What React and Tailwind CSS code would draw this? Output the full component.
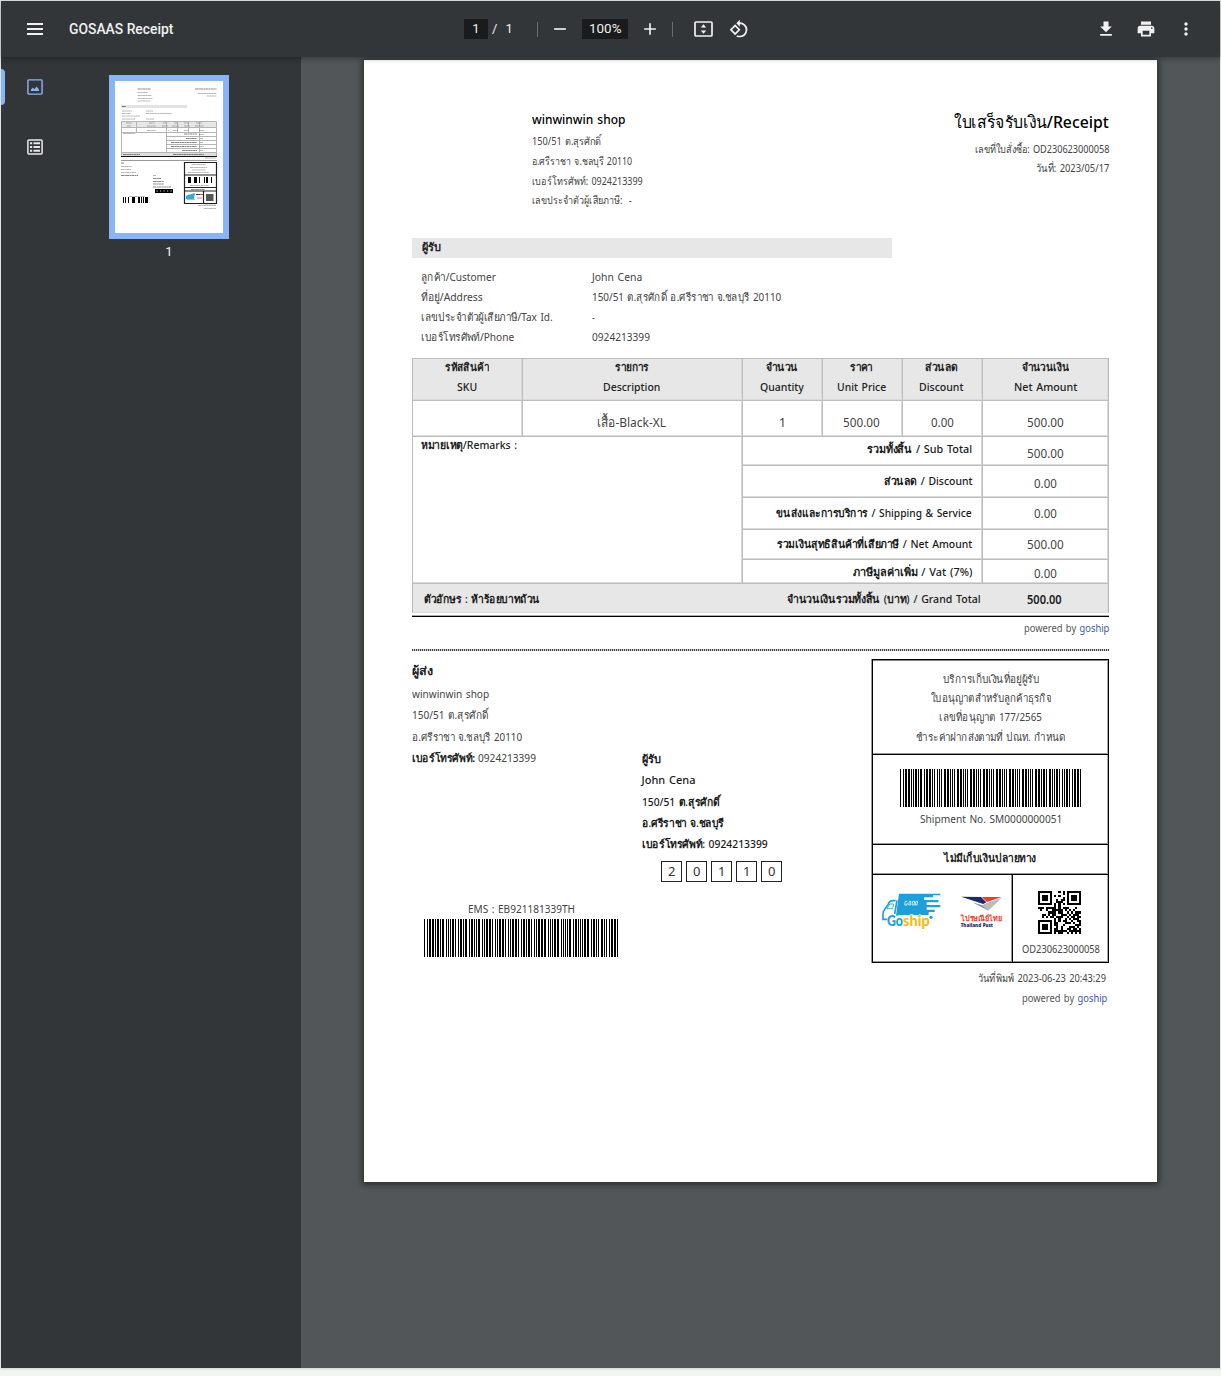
import { useLayoutEffect, useRef } from "react";

/* One line of type, set to an exact measure. */
function Fit({ w, children, className = "" }) {
  const ref = useRef(null);
  useLayoutEffect(() => {
    const el = ref.current;
    el.style.transform = "scaleX(" + w / el.offsetWidth + ")";
  }, [w, children]);
  return (
    <span className={"flex shrink-0 items-center justify-start whitespace-pre " + className} style={{ width: w }}>
      <span ref={ref} className="block w-max shrink-0 origin-left">{children}</span>
    </span>
  );
}

/* Emphasised text: Thai runs take a heavier weight than the Latin ones beside them. */
function Strong({ text }) {
  return text.split(/([\u0E00-\u0E7F]+)/).map((part, i) => (
    <span key={i} className={i % 2 ? "font-semibold" : "font-medium"}>{part}</span>
  ));
}

const CODE39 = {
  0: "nnnwwnwnn", 1: "wnnwnnnnw", 2: "nnwwnnnnw", 3: "wnwwnnnnn", 4: "nnnwwnnnw",
  5: "wnnwwnnnn", 6: "nnwwwnnnn", 7: "nnnwnnwnw", 8: "wnnwnnwnn", 9: "nnwwnnwnn",
  B: "nnwnnwnnw", E: "wnnnwwnnn", H: "wnnnnwwnn", M: "wnwnnnnwn", S: "nnwnnnwwn",
  T: "nnnnwnwwn", "*": "nwnnwnwnn",
};

function Barcode({ value }) {
  const bars = [];
  let x = 0;
  for (const ch of "*" + value + "*") {
    [...CODE39[ch]].forEach((c, i) => {
      const w = c === "w" ? 2 : 1;
      if (i % 2 === 0) bars.push(<rect key={x} x={x} y="0" width={w} height="38" />);
      x += w;
    });
    x += 1;
  }
  return <svg width={x - 1} height="38" shapeRendering="crispEdges" className="block shrink-0">{bars}</svg>;
}

/* Version 1 QR symbol, alphanumeric mode. */
const LEVELS = { L: [19, 7, 1], M: [16, 10, 0], Q: [13, 13, 3] };
const MASKS = [
  (r, c) => (r + c) % 2 === 0,
  (r) => r % 2 === 0,
  (r, c) => c % 3 === 0,
  (r, c) => (r + c) % 3 === 0,
  (r, c) => (Math.floor(r / 2) + Math.floor(c / 3)) % 2 === 0,
  (r, c) => ((r * c) % 2) + ((r * c) % 3) === 0,
  (r, c) => (((r * c) % 2) + ((r * c) % 3)) % 2 === 0,
  (r, c) => (((r + c) % 2) + ((r * c) % 3)) % 2 === 0,
];

function gmul(a, b) {
  let p = 0;
  while (b) {
    if (b & 1) p ^= a;
    a <<= 1;
    if (a & 256) a ^= 0x11d;
    b >>= 1;
  }
  return p;
}

function qrMatrix(text, level, mask) {
  const [nData, nEc, lvl] = LEVELS[level];
  const AN = "0123456789ABCDEFGHIJKLMNOPQRSTUVWXYZ $%*+-./:";
  let bits = "0010" + text.length.toString(2).padStart(9, "0");
  for (let i = 0; i < text.length; i += 2) {
    bits += i + 1 < text.length
      ? (AN.indexOf(text[i]) * 45 + AN.indexOf(text[i + 1])).toString(2).padStart(11, "0")
      : AN.indexOf(text[i]).toString(2).padStart(6, "0");
  }
  bits += "0000".slice(0, nData * 8 - bits.length);
  while (bits.length % 8) bits += "0";
  const data = bits.match(/.{8}/g).map((b) => parseInt(b, 2));
  for (let p = 0xec; data.length < nData; p ^= 0xec ^ 0x11) data.push(p);
  let gen = [1];
  let root = 1;
  for (let i = 0; i < nEc; i++) {
    const next = [...gen, 0];
    gen.forEach((g, j) => { next[j + 1] ^= gmul(g, root); });
    gen = next;
    root = gmul(root, 2);
  }
  const rem = [...data, ...Array(nEc).fill(0)];
  for (let i = 0; i < nData; i++) {
    const f = rem[i];
    gen.forEach((g, j) => { rem[i + j] ^= gmul(g, f); });
  }
  const stream = [...data, ...rem.slice(nData)].map((b) => b.toString(2).padStart(8, "0")).join("");
  const m = Array.from({ length: 21 }, () => Array(21).fill(null));
  for (const [r0, c0] of [[0, 0], [0, 14], [14, 0]]) {
    for (let r = -1; r < 8; r++) for (let c = -1; c < 8; c++) {
      if (m[r0 + r] === undefined || m[r0 + r][c0 + c] === undefined) continue;
      const d = Math.max(Math.abs(r - 3), Math.abs(c - 3));
      m[r0 + r][c0 + c] = d !== 2 && d !== 4;
    }
  }
  for (let i = 8; i < 13; i++) { m[6][i] = i % 2 === 0; m[i][6] = i % 2 === 0; }
  const fd = (lvl << 3) | mask;
  let rm = fd << 10;
  for (let i = 14; i >= 10; i--) if ((rm >> i) & 1) rm ^= 0x537 << (i - 10);
  const fmt = ((fd << 10) | rm) ^ 0x5412;
  for (let i = 0; i < 15; i++) {
    const b = ((fmt >> i) & 1) === 1;
    if (i < 6) m[i][8] = b; else if (i < 8) m[i + 1][8] = b; else m[6 + i][8] = b;
    if (i < 8) m[8][20 - i] = b; else if (i === 8) m[8][7] = b; else m[8][14 - i] = b;
  }
  m[13][8] = true;
  let k = 0;
  let up = true;
  for (let c = 20; c > 0; c -= 2) {
    if (c === 6) c--;
    for (let i = 0; i < 21; i++) {
      const r = up ? 20 - i : i;
      for (const cc of [c, c - 1]) {
        if (m[r][cc] !== null) continue;
        m[r][cc] = (stream[k++] === "1") !== MASKS[mask](r, cc);
      }
    }
    up = !up;
  }
  return m;
}

function QrCode({ value }) {
  const m = qrMatrix(value, "L", 0);
  return (
    <svg width="43" height="43" viewBox="0 0 21 21" shapeRendering="crispEdges" className="block">
      {m.map((row, r) => row.map((on, c) => on && <rect key={r * 21 + c} x={c} y={r} width="1" height="1" />))}
    </svg>
  );
}

function GoshipLogo() {
  return (
    <svg width="60" height="38" viewBox="66 158 180 114" className="block">
      <path d="M117 163H241V168H219V174H192V182H235V189H200V197H241V204H200V211H224V218H206V227H122L108 229Z" fill="#1d9fdb" />
      <path d="M107 184H98Q88 184 84 196L74 210Q69 215 69 225V240H84M111 183L104 224" fill="none" stroke="#1d9fdb" strokeWidth="5" />
      <path d="M89 194H101L98 208H81Z" fill="#fff" stroke="#1d9fdb" strokeWidth="2.5" />
      <circle cx="213" cy="234" r="5" fill="#1d9fdb" />
      <path d="M136 186H142M136 186L134 197H141L142 191M148 186H153L151 197H146ZM158 186H164L162 197H156ZM168 186H173L171 197H165Z" fill="none" stroke="#fff" strokeWidth="2.2" />
      <g fontFamily="Lato, sans-serif" fontWeight="900" fontSize="45" strokeLinejoin="round" paintOrder="stroke" stroke="#fff" strokeWidth="4">
        <text x="81" y="260" fill="#1d9fdb" textLength="48" lengthAdjust="spacingAndGlyphs">Go</text>
        <text x="129" y="260" fill="#fdb813" textLength="80" lengthAdjust="spacingAndGlyphs">ship</text>
      </g>
    </svg>
  );
}

function ThailandPostLogo() {
  return (
    <svg width="44" height="34" viewBox="300 166 132 102" className="block">
      <path d="M303 171L363 172L379 188L370 193Z" fill="#1b2a6b" />
      <path d="M365 172H425L381 187Z" fill="#e8402c" />
      <path d="M425 174L385 213L367 197L372 194L380 190Z" fill="#b9bbbe" />
      <path d="M337 188L367 197L385 213Z" fill="#8d9096" />
      <text x="302" y="245" fontFamily="'Noto Sans', sans-serif" fontWeight="700" fontSize="22" fill="#e8402c" textLength="124" lengthAdjust="spacingAndGlyphs">ไปรษณีย์ไทย</text>
      <text x="302" y="261" fontFamily="'Open Sans', sans-serif" fontWeight="800" fontSize="13" fill="#1b2a6b" textLength="97" lengthAdjust="spacingAndGlyphs">Thailand Post</text>
    </svg>
  );
}

const COLUMNS = [
  ["รหัสสินค้า", 44, "SKU", 20],
  ["รายการ", 34, "Description", 57],
  ["จำนวน", 32, "Quantity", 44],
  ["ราคา", 23, "Unit Price", 49],
  ["ส่วนลด", 33, "Discount", 45],
  ["จำนวนเงิน", 47, "Net Amount", 63],
];

const cell = "border-l border-t border-[#bdbdbd] flex justify-center shadow-[inset_-1px_-1px_0_#dadada]";

function ItemsTable() {
  return (
    <div className="grid h-[255px] grid-cols-[110px_220px_80px_80px_80px_127px] grid-rows-[42px_36px_29px_32px_32px_30px_24px_30px] border-b border-[#bdbdbd] font-medium">
      {COLUMNS.map(([th, tw, en, ew], i) => (
        <div key={en} className={cell + " flex-col items-center justify-start bg-[#e7e7e7] leading-[20px] text-[#222]" + (i === 5 ? " border-r" : " pr-[2px]")}>
          <Fit w={tw} className="mt-[-2px] h-5 text-[11px] font-semibold">{th}</Fit>
          <Fit w={ew} className="h-5 text-[11px]">{en}</Fit>
        </div>
      ))}
      <div className={cell} />
      <div className={cell + " items-center pr-[2px] pt-2 text-[13px] font-normal text-[#444]"}><Fit w={69}>เสื้อ-Black-XL</Fit></div>
      <div className={cell + " items-center pt-2 text-[13px] font-normal text-[#444]"}>1</div>
      <div className={cell + " items-center pr-[2px] pt-2 text-[13px] font-normal text-[#444]"}><Fit w={37}>500.00</Fit></div>
      <div className={cell + " items-center pr-px pt-2 text-[13px] font-normal text-[#444]"}><Fit w={23}>0.00</Fit></div>
      <div className={cell + " items-center border-r pr-px pt-2 text-[13px] font-normal text-[#444]"}><Fit w={37}>500.00</Fit></div>
      <div className={cell + " col-span-2 row-span-5 justify-start pl-2 text-[11px] leading-[18px] text-[#222]"}>
        <Fit w={96} className="mt-[-1px] h-[18px]"><Strong text="หมายเหตุ/Remarks :" /></Fit>
      </div>
      {[
        ["รวมทั้งสิ้น / Sub Total", 105, "500.00", 37, "pb-[4px]", "pt-[6px]"],
        ["ส่วนลด / Discount", 88, "0.00", 23, "", "pt-[5px]"],
        ["ขนส่งและการบริการ / Shipping & Service", 196, "0.00", 23, "", "pt-[1px]"],
        ["รวมเงินสุทธิสินค้าที่เสียภาษี / Net Amount", 195, "500.00", 37, "", ""],
        ["ภาษีมูลค่าเพิ่ม / Vat (7%)", 119, "0.00", 23, "pt-[2px]", "pt-[5px]"],
      ].map(([label, lw, amount, aw, lp, ap]) => (
        <div key={label} className="contents">
          <div className={cell + " col-span-3 items-center justify-end pr-[10px] text-[11px] text-[#1a1a1a] " + lp}><Fit w={lw}><Strong text={label} /></Fit></div>
          <div className={cell + " items-center border-r pr-px text-[13px] font-normal text-[#444] " + ap}><Fit w={aw}>{amount}</Fit></div>
        </div>
      ))}
      <div className="col-span-6 flex items-center border-x border-t border-[#bdbdbd] bg-[#e7e7e7] pl-[11px] pt-[2px] text-[11px] text-[#1a1a1a] shadow-[inset_-1px_-1px_0_#dadada]">
        <Fit w={116}><Strong text="ตัวอักษร : ห้าร้อยบาทถ้วน" /></Fit>
        <div className="flex flex-1 justify-end"><Fit w={194}><Strong text="จำนวนเงินรวมทั้งสิ้น (บาท) / Grand Total" /></Fit></div>
        <div className="flex w-[127px] justify-center text-[12px] font-semibold"><Fit w={35}>500.00</Fit></div>
      </div>
    </div>
  );
}

function PoweredBy({ className = "" }) {
  return (
    <div className={"flex justify-end text-[10px] leading-5 text-[#555] " + className}>
      <Fit w={85} className="h-5">powered by <span className="text-[#3b57a5]">goship</span></Fit>
    </div>
  );
}

function Receipt() {
  return (
    <main className="h-[1122px] w-[793px] bg-white pl-12 pr-12 font-['Noto_Sans','Liberation_Sans',sans-serif] text-[#444] [word-spacing:1px] shadow-[0_1px_6px_2px_rgba(0,0,0,0.45)]">
      <header className="flex h-[178px] justify-between pl-[119.5px] pt-[48px]">
        <div className="text-[10.5px] leading-5">
          <Fit w={93} className="h-[23px] text-[12.5px] font-medium text-black">winwinwin shop</Fit>
          <Fit w={69} className="h-5">150/51 ต.สุรศักดิ์</Fit>
          <Fit w={100} className="h-5">อ.ศรีราชา จ.ชลบุรี 20110</Fit>
          <Fit w={111} className="h-5">เบอร์โทรศัพท์: 0924213399</Fit>
          <Fit w={100} className="h-[18px]">{"เลขประจำตัวผู้เสียภาษี:  -"}</Fit>
        </div>
        <div className="flex flex-col items-end text-[10.5px] leading-5">
          <Fit w={155} className="h-[27px] text-[16.5px] font-medium text-black">ใบเสร็จรับเงิน/Receipt</Fit>
          <Fit w={134} className="mt-[4px] h-5">เลขที่ใบสั่งซื้อ: OD230623000058</Fit>
          <Fit w={73} className="h-[18px]">วันที่: 2023/05/17</Fit>
        </div>
      </header>

      <div className="h-5 w-[480px] bg-[#e7e7e7] pl-[10px] text-[11px] font-semibold leading-5 text-[#222]"><Fit w={19} className="h-[18px]">ผู้รับ</Fit></div>
      <dl className="mt-[9px] h-[91px] pl-[9px] text-[11px] leading-5">
        {[
          ["ลูกค้า/Customer", 75, "John Cena", 50],
          ["ที่อยู่/Address", 62, "150/51 ต.สุรศักดิ์ อ.ศรีราชา จ.ชลบุรี 20110", 189],
          ["เลขประจำตัวผู้เสียภาษี/Tax Id.", 132, "-", 3],
          ["เบอร์โทรศัพท์/Phone", 93, "0924213399", 58],
        ].map(([k, kw, v, vw]) => (
          <div key={k} className="flex h-5">
            <dt className="w-[170.5px]"><Fit w={kw} className="h-5">{k}</Fit></dt>
            <dd><Fit w={vw} className="h-5">{v}</Fit></dd>
          </div>
        ))}
      </dl>

      <ItemsTable />
      <div className="mt-[2px] h-[2px] border-b border-t border-b-black border-t-[#aaa]" />
      <PoweredBy className="mt-[1px] h-[31px]" />
      <div className="h-[2px] bg-[repeating-linear-gradient(90deg,#444_0_1px,#ccc_1px_2px)]" />

      <section className="mt-2 flex h-[304px]">
        <div className="w-[229.5px] text-[11px] leading-[22px]">
          <Fit w={21} className="h-6 text-[12px] font-semibold text-[#222]">ผู้ส่ง</Fit>
          <Fit w={77} className="h-[21px]">winwinwin shop</Fit>
          <Fit w={76} className="h-[21px]">150/51 ต.สุรศักดิ์</Fit>
          <Fit w={110} className="h-[23px]">อ.ศรีราชา จ.ชลบุรี 20110</Fit>
          <div className="flex">
            <Fit w={63} className="h-5 font-semibold text-[#222]">เบอร์โทรศัพท์:</Fit>
            <Fit w={58} className="ml-[3px] h-5">0924213399</Fit>
          </div>
          <div className="mt-[132px] flex w-[194px] translate-x-3 flex-col items-center">
            <Fit w={107} className="h-[17px]">EMS : EB921181339TH</Fit>
            <div className="mt-[2px]"><Barcode value="EB921181339TH" /></div>
          </div>
        </div>

        <div className="w-[230.5px] pt-[88px] text-[11px] font-medium leading-[21px] text-[#1a1a1a]">
          <Fit w={19} className="h-[22px] font-semibold">ผู้รับ</Fit>
          <Fit w={54} className="h-[21px]">John Cena</Fit>
          <Fit w={78} className="h-[22px]"><Strong text="150/51 ต.สุรศักดิ์" /></Fit>
          <Fit w={82} className="h-[21px]"><Strong text="อ.ศรีราชา จ.ชลบุรี" /></Fit>
          <Fit w={126} className="h-[21px]"><Strong text="เบอร์โทรศัพท์: 0924213399" /></Fit>
          <div className="ml-[19.5px] mt-[7px] flex gap-1 text-[13px] font-normal text-[#333]">
            {[..."20110"].map((d, i) => (
              <span key={i} className="flex size-[21px] items-center justify-center border border-[#222]">
                <Fit w={7}>{d}</Fit>
              </span>
            ))}
          </div>
        </div>

        <div className="flex w-[237px] flex-col border border-black text-[11px] shadow-[-1px_0_0_#999,inset_0_1px_0_#888,inset_0_-1px_0_#999,inset_-1px_0_0_#aaa]">
          <div className="flex h-[94px] flex-col items-center pt-[9px] leading-5 shadow-[inset_0_-1px_0_#999]">
            <Fit w={96} className="h-5">บริการเก็บเงินที่อยู่ผู้รับ</Fit>
            <Fit w={120} className="h-[18px]">ใบอนุญาตสำหรับลูกค้าธุรกิจ</Fit>
            <Fit w={103} className="h-5">เลขที่อนุญาต 177/2565</Fit>
            <Fit w={150} className="h-[19px]">ชำระค่าฝากส่งตามที่ ปณท. กำหนด</Fit>
          </div>
          <div className="flex h-[90px] flex-col items-center border-t border-black pt-[14px] shadow-[inset_0_-1px_0_#999]">
            <Barcode value="SM0000000051" />
            <Fit w={142} className="h-6">Shipment No. SM0000000051</Fit>
          </div>
          <div className="flex h-[30px] items-center justify-center border-t border-black pb-[2px] pr-px font-semibold text-[#222] shadow-[inset_0_-1px_0_#999]">
            <Fit w={92}>ไม่มีเก็บเงินปลายทาง</Fit>
          </div>
          <div className="flex flex-1 border-t border-black">
            <div className="flex w-[140px] items-start border-r border-black pl-[9px] pt-[17px] shadow-[inset_-1px_0_0_#999]">
              <GoshipLogo />
              <div className="ml-[18px] mt-[3px]"><ThailandPostLogo /></div>
            </div>
            <div className="flex flex-1 flex-col items-center pr-[2px] pt-4">
              <QrCode value="OD230623000058" />
              <Fit w={78} className="ml-[2px] mt-[6px] h-5 text-[10.5px]">OD230623000058</Fit>
            </div>
          </div>
        </div>
      </section>
      <div className="mt-[5px] flex h-5 justify-end pr-[3px] text-[10.5px] leading-5"><Fit w={128} className="h-5">วันที่พิมพ์ 2023-06-23 20:43:29</Fit></div>
      <PoweredBy className="h-5 pr-[2px]" />
    </main>
  );
}

const THUMB_UPPER = [
  [22.5, 18, 13, 1], [22.5, 21.5, 10], [22.5, 24.5, 14], [22.5, 27.5, 15], [22.5, 30, 13],
  [80, 18, 21.5, 1], [83, 22.5, 18.5], [91.5, 25, 10],
  [7, 35.5, 4, 1], [7, 40, 10], [7, 42.5, 9], [7, 45, 18], [7, 48, 13],
  [31, 40, 7], [31, 42.5, 26], [31, 48, 8],
  [11, 52, 6], [12, 55, 4], [34, 52, 6], [32, 55, 9], [48, 52, 4], [47, 55, 6],
  [59, 52, 4], [57, 55, 7], [69, 52, 5], [69, 55, 6], [81, 52, 6], [80, 55, 9],
  [32, 59.5, 9], [53, 59.5, 1], [58, 59.5, 5], [69, 59.5, 4], [84, 59.5, 5],
  [8, 62.5, 12], [69, 63, 13, 1], [71, 67.5, 11, 1], [56, 71.5, 26, 1], [56, 75.5, 26, 1], [67, 79.5, 15, 1],
  [84, 63.5, 5], [85, 67.5, 3], [85, 71.5, 3], [84, 75.5, 5], [85, 79.5, 3],
  [8, 83.5, 17, 1], [58, 83.5, 26, 1], [84, 83.5, 5, 1], [90, 87, 11],
];
const THUMB_LOWER = [
  [6, 93, 3, 1], [6, 96.5, 11], [6, 99.5, 10], [6, 102.5, 15], [6, 105.5, 17, 1],
  [38, 105.5, 3], [38, 108.5, 8, 1], [38, 111.5, 11, 1], [38, 114, 11, 1], [38, 117, 18, 1],
  [14, 126.5, 16], [77, 94.5, 14], [75, 97.5, 17], [77, 100, 14], [73, 102.5, 21],
  [75, 115.5, 19], [76, 119.5, 14, 1], [90, 134, 11], [83, 135.5, 18], [89, 138.5, 12],
];

function ThumbText({ rows }) {
  return rows.map(([x, y, w, bold], i) => (
    <path key={i} d={"M" + x + " " + y + "h" + w} stroke={bold ? "#444" : "#777"} strokeWidth={bold ? 0.9 : 0.75} strokeDasharray="3 .3 1.6 .3" opacity=".7" />
  ));
}

function Thumbnail() {
  return (
    <svg width="108" height="152" className="block bg-white">
      <g transform="translate(0 -10)">
        <rect x="6" y="34" width="66" height="3" fill="#e3e3e3" />
        <rect x="6" y="50.5" width="95" height="6.5" fill="#e6e6e6" />
        <rect x="6" y="82" width="95" height="3.5" fill="#dedede" />
        <path d="M6.5 50.5H101.5V85M6.5 50V85M6 56.5H101.5M6 61.5H101.5M51 65.5H101M51 69.5H101M51 73.5H101M51 77.5H101M6 81.5H101M21.5 50V62M51.5 50V82M62.5 50V62M73.5 50V62M84.5 50V82" fill="none" stroke="#b4b4b4" />
        <path d="M6 85.5H102" stroke="#111" />
        <path d="M6 89.5H102" stroke="#999" />
        <ThumbText rows={THUMB_UPPER} />
      </g>
      <g transform="translate(0 -11)">
        <ThumbText rows={THUMB_LOWER} />
        <path d="M69.5 92.5H101.5V133.5H69.5ZM69 105H102M69 117.5H102M69 121H102M88.5 121V133" fill="none" stroke="#222" strokeWidth="1.2" />
        <path d="M73 107h3v6h-3zM79 107h3v6h-3zM84 107h1v6h-1zM89 107h1v6h-1zM91 107h2v6h-2zM96 107h1v6h-1zM8 127h1v6h-1zM10 127h1v6h-1zM13 127h1v6h-1zM17 127h3v6h-3zM23 127h2v6h-2zM26 127h1v6h-1zM28 127h1v6h-1zM30 127h3v6h-3z" shapeRendering="crispEdges" />
        <rect x="40" y="119" width="18" height="4" />
        <path d="M41.5 121H57" stroke="#ccc" strokeWidth="1.2" strokeDasharray="1.2 2.3" />
        <path d="M73 125L80 123L79 129H71V126Z" fill="#3aa6dd" />
        <path d="M72 129.5h8" stroke="#e6b455" />
        <path d="M81 124.5h4" stroke="#223a7a" />
        <path d="M85 124.5h3" stroke="#e04a3a" />
        <path d="M82 128h5" stroke="#b04a4a" strokeWidth=".7" />
        <rect x="91" y="124" width="7.5" height="7" fill="#555" />
      </g>
    </svg>
  );
}

function IconButton({ className = "", size = 20, d }) {
  return (
    <svg width={size} height={size} viewBox="0 0 24 24" fill="#f1f1f1" className={"block shrink-0 " + className}>
      <path d={d} />
    </svg>
  );
}

function Toolbar() {
  return (
    <header className="relative z-10 flex h-14 shrink-0 items-center bg-[#323639] font-[Roboto,sans-serif] text-[14px] text-[#f1f1f1] shadow-[0_2px_5px_rgba(0,0,0,0.3)]">
      <svg width="16" height="12" className="ml-[26px] block" shapeRendering="crispEdges" fill="#f1f1f1">
        <path d="M0 0h16v2H0zM0 5h16v2H0zM0 10h16v2H0z" />
      </svg>
      <h1 className="ml-[26px] w-[395px] font-medium"><Fit w={104}>GOSAAS Receipt</Fit></h1>
      <span className="flex h-5 w-6 items-center justify-center bg-[#191b1c] text-[13px]">1</span>
      <span className="ml-[4px] text-[13px]">/</span>
      <span className="ml-[8px] w-[9px] text-[13px]">1</span>
      <i className="ml-[23px] h-[15px] w-px bg-[#6b6e70]" />
      <IconButton className="ml-[12px]" d="M19 13H5v-2h14v2z" />
      <span className="ml-[12px] flex h-5 w-[46px] items-center justify-center bg-[#191b1c] text-[13px]"><Fit w={32}>100%</Fit></span>
      <IconButton className="ml-[12px]" d="M19 13h-6v6h-2v-6H5v-2h6V5h2v6h6v2z" />
      <i className="ml-[12px] h-[15px] w-px bg-[#6b6e70]" />
      <svg width="19" height="16" viewBox="0 0 19 16" className="ml-[20.5px] block">
        <rect x="1" y="1" width="17" height="14" rx="1" fill="none" stroke="#f1f1f1" strokeWidth="1.7" />
        <path d="M6.8 6.5L9.5 3.3L12.2 6.5ZM6.8 9.5H12.2L9.5 12.7Z" fill="#f1f1f1" />
      </svg>
      <IconButton className="ml-[16px]" d="M7.34 6.41L.86 12.9l6.49 6.48 6.49-6.48-6.5-6.49zM3.69 12.9l3.66-3.66L11 12.9l-3.66 3.66-3.65-3.66zm15.67-6.26A8.95 8.95 0 0013 4V.76L8.76 5 13 9.24V6a7 7 0 010 14 6.9 6.9 0 01-2.9-.64l-1.49 1.49A8.9 8.9 0 0013 22a9 9 0 006.36-15.36z" />
      <div className="ml-auto mr-[24px] flex gap-5">
        <IconButton d="M5 20h14v-2H5v2zM19 9h-4V3H9v6H5l7 7 7-7z" />
        <IconButton d="M19 8H5c-1.66 0-3 1.34-3 3v6h4v4h12v-4h4v-6c0-1.66-1.34-3-3-3zm-3 11H8v-5h8v5zm3-7c-.55 0-1-.45-1-1s.45-1 1-1 1 .45 1 1-.45 1-1 1zm-1-9H6v4h12V3z" />
        <IconButton d="M12 8c1.1 0 2-.9 2-2s-.9-2-2-2-2 .9-2 2 .9 2 2 2zm0 2c-1.1 0-2 .9-2 2s.9 2 2 2 2-.9 2-2-.9-2-2-2zm0 6c-1.1 0-2 .9-2 2s.9 2 2 2 2-.9 2-2-.9-2-2-2z" />
      </div>
    </header>
  );
}

function Sidebar() {
  return (
    <aside className="flex w-[300px] shrink-0 bg-[#323639]">
      <div className="flex w-[68px] flex-col pt-3">
        <div className="flex h-9 items-center">
          <span className="h-9 w-1 rounded-r bg-[#8ab4f8]" />
          <svg width="16" height="16" viewBox="0 0 16 16" className="ml-[22px] block">
            <rect x=".9" y=".9" width="14.2" height="14.2" rx="1" fill="none" stroke="#8ab4f8" strokeWidth="1.4" />
            <path d="M4 12V10.6L5.8 8.6L7.2 10.2L9.6 7.6L12 10.4V12Z" fill="#8ab4f8" />
          </svg>
        </div>
        <svg width="16" height="16" viewBox="0 0 16 16" className="ml-[26px] mt-[34px] block" fill="none" stroke="#e8e8e8">
          <rect x=".9" y=".9" width="14.2" height="14.2" rx="1" strokeWidth="1.5" />
          <path d="M3 4.3h2.2M6.5 4.3H13M3 8h2.2M6.5 8H13M3 11.7h2.2M6.5 11.7H13" strokeWidth="2" />
        </svg>
      </div>
      <div className="ml-10 mt-[18px] flex w-[120px] flex-col items-center self-start">
        <div className="border-[6px] border-[#8ab4f8]"><Thumbnail /></div>
        <span className="mt-[4px] font-[Roboto,sans-serif] text-[13px] leading-[18px] text-[#f1f1f1]">1</span>
      </div>
    </aside>
  );
}

export default function App() {
  return (
    <div className="h-[1376px] w-[1221px] overflow-hidden bg-[#f3f4f4]">
      <div className="flex h-[1368px] flex-col border-x border-t border-[#dfe3e2] shadow-[0_1px_2px_#d0d0d0]">
        <Toolbar />
        <div className="flex min-h-0 flex-1 bg-[#525659]">
          <Sidebar />
          <div className="flex-1 pl-[63px] pt-[3px]"><Receipt /></div>
        </div>
      </div>
    </div>
  );
}
